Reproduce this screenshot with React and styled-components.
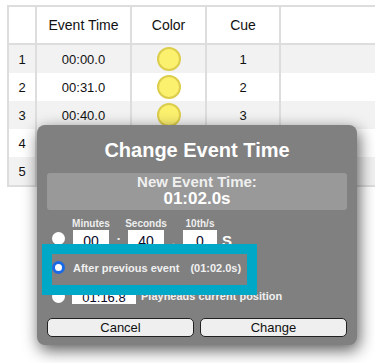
import React from "react";
import styled, { createGlobalStyle } from "styled-components";

const GlobalStyle = createGlobalStyle`
  html, body {
    margin: 0;
    background: #fff;
    font-family: "Liberation Sans", Arial, sans-serif;
    overflow: hidden;
  }
`;

const Page = styled.div`
  position: relative;
  width: 375px;
  height: 363px;
  overflow: hidden;
  padding: 5px 0 0 7px;
  box-sizing: border-box;
`;

const Grid = styled.div`
  width: 480px;
  border: 2px solid #ddd;
  background: #ddd;
`;

const Row = styled.div`
  display: grid;
  grid-template-columns: 26px 93px 73px 72px 1fr;
  column-gap: 2px;
  height: ${(p) => (p.$head ? "36px" : "28px")};
  margin-bottom: ${(p) => (p.$head ? "2px" : "0")};
`;

const Cell = styled.div`
  display: flex;
  align-items: center;
  justify-content: center;
  background: ${(p) => (p.$shade ? "#f2f2f2" : "#fff")};
  color: #111;
  font-size: ${(p) => (p.$head ? "14px" : "13px")};
`;

const Dot = styled.span`
  width: 24px;
  height: 24px;
  box-sizing: border-box;
  border-radius: 50%;
  background: #fcf06f;
  border: 2px solid #dccd4c;
`;

const Dialog = styled.div`
  position: absolute;
  left: 37px;
  top: 125px;
  width: 320px;
  height: 220px;
  box-sizing: border-box;
  padding: 13.5px 10px 8px;
  background: #808080;
  border-radius: 8px;
  box-shadow: 2px 5px 16px rgba(0, 0, 0, 0.65);
  display: flex;
  flex-direction: column;
  color: #f2f2f2;
`;

const Title = styled.div`
  font-size: 20px;
  line-height: 23px;
  font-weight: bold;
  color: #fff;
  text-align: center;
`;

const Summary = styled.div`
  margin-top: 11.5px;
  height: 37px;
  box-sizing: border-box;
  background: #999;
  border-radius: 3px;
  text-align: center;
  font-weight: bold;
  color: #f4f4f4;
`;

const SummaryLine = styled.div`
  font-size: ${(p) => (p.$big ? "17px" : "15px")};
  line-height: 17px;
  color: ${(p) => (p.$big ? "#fff" : "#efefef")};
`;

const TimeRow = styled.div`
  display: flex;
  align-items: flex-end;
  margin-top: 7.5px;
`;

const Radio = styled.input.attrs({ type: "radio" })`
  appearance: none;
  width: 13px;
  height: 13px;
  box-sizing: border-box;
  flex: none;
  margin: 0 ${(p) => p.$gap || "8px"} ${(p) => p.$lift || "0"} 5px;
  border-radius: 50%;
  background: #fff;
  border: none;

  &:checked {
    border: 3px solid #1a6ae6;
  }
`;

const Field = styled.div`
  width: ${(p) => p.$w};
  display: flex;
  flex-direction: column;
  align-items: center;
`;

const FieldLabel = styled.span`
  font-size: 10px;
  line-height: 12px;
  font-weight: bold;
  white-space: nowrap;
  color: #eee;
`;

const Box = styled.span`
  width: ${(p) => p.$w};
  height: ${(p) => p.$h || "22px"};
  line-height: ${(p) => p.$lh || "22px"};
  background: #fff;
  color: #0c0c2a;
  font-size: ${(p) => p.$size || "14px"};
  font-weight: normal;
  text-align: center;
  flex: none;
`;

const Sep = styled.span`
  width: 19px;
  height: 22px;
  line-height: 22px;
  text-align: center;
  font-size: 14px;
  font-weight: bold;
  color: #eee;
`;

const Unit = styled.span`
  margin-left: 5px;
  height: 22px;
  line-height: 22px;
  font-size: 15px;
  font-weight: bold;
  color: #fff;
`;

const OptionRow = styled.label`
  display: flex;
  align-items: center;
  height: ${(p) => p.$h};
  margin-top: ${(p) => p.$top};
  font-size: 11px;
  font-weight: bold;
  color: #f0f0f0;
  white-space: nowrap;
`;

const Aside = styled.span`
  margin-left: ${(p) => p.$gap || "11px"};
`;

const Buttons = styled.div`
  display: flex;
  gap: 6px;
  margin-top: 13px;
`;

const Button = styled.button`
  flex: 1;
  height: 19px;
  padding: 0;
  border: 1px solid #222;
  border-radius: 5px;
  background: #efefef;
  color: #111;
  font-family: inherit;
  font-size: 13px;
  line-height: 17px;
`;

const Highlight = styled.div`
  position: absolute;
  left: 5px;
  top: 119px;
  width: 215px;
  height: 51px;
  box-sizing: border-box;
  border: 10px solid #00a8c8;
  pointer-events: none;
`;

const events = [
  ["1", "00:00.0", "1"],
  ["2", "00:31.0", "2"],
  ["3", "00:40.0", "3"],
  ["4", "", ""],
  ["5", "", ""],
];

export default function App() {
  return (
    <Page>
      <GlobalStyle />
      <Grid>
        <Row $head>
          <Cell $head />
          <Cell $head>Event Time</Cell>
          <Cell $head>Color</Cell>
          <Cell $head>Cue</Cell>
          <Cell $head />
        </Row>
        {events.map(([n, time, cue], i) => (
          <Row key={n}>
            <Cell $shade={i % 2 === 0}>{n}</Cell>
            <Cell $shade={i % 2 === 0}>{time}</Cell>
            <Cell $shade={i % 2 === 0}>{time && <Dot />}</Cell>
            <Cell $shade={i % 2 === 0}>{cue}</Cell>
            <Cell $shade={i % 2 === 0} />
          </Row>
        ))}
      </Grid>

      <Dialog>
        <Title>Change Event Time</Title>
        <Summary>
          <SummaryLine>New Event Time:</SummaryLine>
          <SummaryLine $big>01:02.0s</SummaryLine>
        </Summary>

        <TimeRow>
          <Radio name="mode" $lift="6.5px" />
          <Field $w="36px">
            <FieldLabel>Minutes</FieldLabel>
            <Box $w="36px">00</Box>
          </Field>
          <Sep>:</Sep>
          <Field $w="36px">
            <FieldLabel>Seconds</FieldLabel>
            <Box $w="36px">40</Box>
          </Field>
          <Sep>.</Sep>
          <Field $w="34px">
            <FieldLabel>10th/s</FieldLabel>
            <Box $w="34px">0</Box>
          </Field>
          <Unit>S</Unit>
        </TimeRow>

        <OptionRow $h="22px" $top="5px">
          <Radio name="mode" defaultChecked />
          After previous event
          <Aside>(01:02.0s)</Aside>
        </OptionRow>

        <OptionRow $h="18px" $top="8.5px">
          <Radio name="mode" $gap="7px" />
          <Box $w="64px" $h="15px" $lh="18px" $size="13px">01:16.8</Box>
          <Aside $gap="5px">Playheads current position</Aside>
        </OptionRow>

        <Buttons>
          <Button>Cancel</Button>
          <Button>Change</Button>
        </Buttons>

        <Highlight />
      </Dialog>
    </Page>
  );
}
